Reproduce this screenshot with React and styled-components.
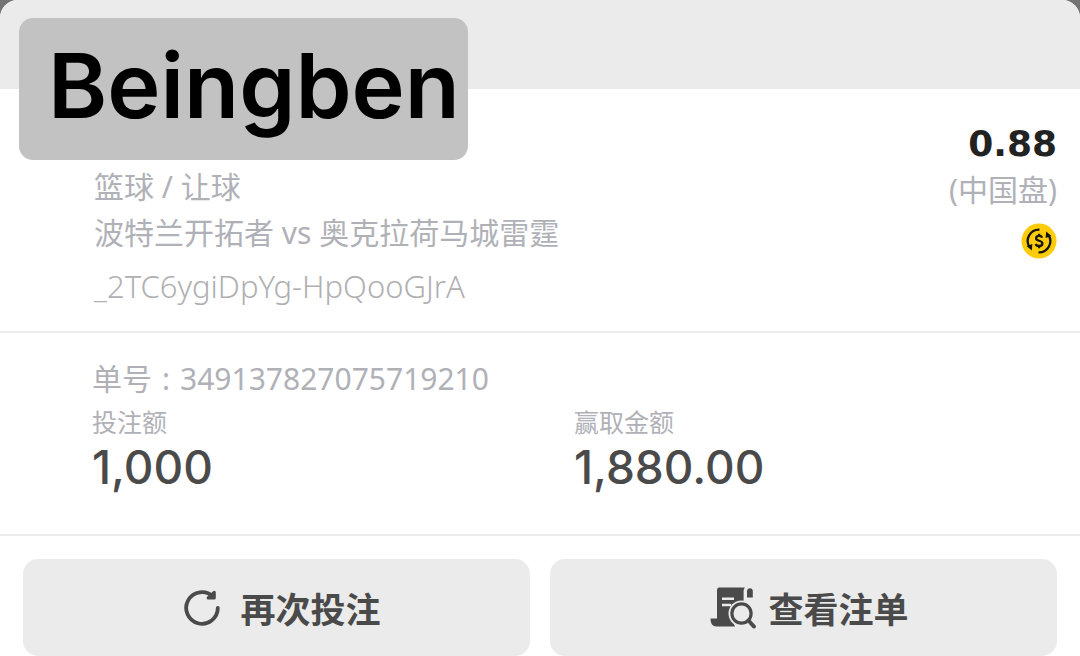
import styled, { createGlobalStyle } from 'styled-components'

const stakes = [
  { label: '投注额', value: '1,000' },
  { label: '赢取金额', value: '1,880.00' },
]

const CoinIcon = () => (
  <svg width="36" height="36" viewBox="0 0 36 36" fill="none" aria-hidden="true">
    <circle cx="18" cy="18" r="17.5" fill="#fccc0a" />
    <path d="M18.5 6.6A11.3 11.3 0 0 0 8.4 23.8" stroke="#17140a" strokeWidth="2.3" />
    <path d="M17.5 29.4A11.3 11.3 0 0 0 27.6 12.2" stroke="#17140a" strokeWidth="2.3" />
    <path d="M5.6 23l5.8-2-.6 6.4z" fill="#17140a" />
    <path d="M30.4 13l-5.8 2 .6-6.4z" fill="#17140a" />
    <path
      d="M21.2 14.6c-.5-1.2-1.6-1.7-3.1-1.7-1.8 0-3 .9-3 2.4 0 3.3 6.3 1.6 6.3 5.1 0 1.6-1.4 2.6-3.3 2.6-1.7 0-3-.7-3.5-2M18.1 10.8v2.4M18.1 22.8v2.4"
      stroke="#17140a"
      strokeWidth="2.3"
    />
  </svg>
)

const RepeatIcon = () => (
  <svg width="36" height="36" viewBox="0 0 36 36" fill="none" stroke="#4a4a4a" strokeWidth="3.8" strokeLinecap="round" aria-hidden="true">
    <path d="M33.8 18A15.8 15.8 0 1 1 29 6.6" />
    <path d="M30.2 2.4V8h-6z" strokeWidth="3.2" strokeLinejoin="round" fill="#4a4a4a" />
  </svg>
)

const SlipIcon = () => (
  <svg width="46" height="42" viewBox="0 0 46 42" fill="none" aria-hidden="true">
    <path
      d="M9 .5h26C33.6 1.8 33.6 3.6 33.6 5.5V17H22v14.5l3 8H6.5C2.5 39.5.5 36.5.5 31.5H7V3A2.5 2.5 0 0 1 9 .5z"
      fill="#4a4a4a"
    />
    <path d="M37 10.5v-7a3 3 0 0 1 5.8 0v7z" fill="#4a4a4a" />
    <path d="M12 11.7h12M12 18h9" stroke="#ebebeb" strokeWidth="2.6" />
    <circle cx="31.5" cy="26.5" r="13" fill="#ebebeb" />
    <circle cx="31.5" cy="26.5" r="9.6" stroke="#4a4a4a" strokeWidth="3.2" />
    <path d="M38.5 33.5l5.4 6" stroke="#4a4a4a" strokeWidth="4" strokeLinecap="round" />
  </svg>
)

const App = () => {
  return (
    <>
      <GlobalStyle />
      <Sheet>
        <Header>
          <NameTag>Beingben</NameTag>
        </Header>

        <Details>
          <Match>
            <Line>篮球 / 让球</Line>
            <Line>波特兰开拓者 vs 奥克拉荷马城雷霆</Line>
            <Reference>_2TC6ygiDpYg-HpQooGJrA</Reference>
          </Match>
          <Odds>
            <OddsValue>0.88</OddsValue>
            <Line>(中国盘)</Line>
            <CoinIcon />
          </Odds>
        </Details>

        <Order>
          <OrderLine>
            <span>单号</span>
            <span>:</span>
            <span>349137827075719210</span>
          </OrderLine>
          <Stakes>
            {stakes.map((item) => (
              <div key={item.label}>
                <StakeLabel>{item.label}</StakeLabel>
                <StakeValue>{item.value}</StakeValue>
              </div>
            ))}
          </Stakes>
        </Order>

        <Actions>
          <ActionButton type="button" $gap="20px">
            <RepeatIcon />
            再次投注
          </ActionButton>
          <ActionButton type="button" $gap="12px">
            <SlipIcon />
            查看注单
          </ActionButton>
        </Actions>
      </Sheet>
    </>
  )
}

const GlobalStyle = createGlobalStyle`
  * {
    box-sizing: border-box;
  }

  body {
    margin: 0;
    background: #747474;
    font-family: 'Noto Sans', 'Noto Sans CJK SC', sans-serif;
    color: #4a4a4a;
  }

  p {
    margin: 0;
  }
`

const Sheet = styled.main`
  min-height: 100vh;
  border-radius: 18px 18px 0 0;
  background: #fff;
  overflow: hidden;
`

const Header = styled.header`
  position: relative;
  height: 89px;
  background: #ebebeb;
`

const NameTag = styled.h1`
  position: absolute;
  top: 18px;
  left: 19px;
  margin: 0;
  padding: 0 8px 6px 29px;
  border-radius: 14px;
  background: #c2c2c2;
  color: #000;
  font-family: Inter, sans-serif;
  font-size: 90px;
  font-weight: 600;
  line-height: 136px;
`

const Details = styled.section`
  display: flex;
  justify-content: space-between;
  padding: 32px 23px 21px 94px;
  border-bottom: 2px solid #ebebeb;
`

const Match = styled.div`
  padding-top: 43px;
`

const Line = styled.p`
  color: #b0b1b7;
  font-size: 30px;
  line-height: 46px;
`

const Reference = styled.p`
  margin-top: 8px;
  padding-bottom: 2px;
  color: #b0b0b2;
  font-size: 31px;
  font-weight: 300;
  line-height: 44px;
`

const Odds = styled.div`
  display: flex;
  flex-direction: column;
  align-items: flex-end;

  svg {
    margin-top: 10px;
  }
`

const OddsValue = styled.p`
  color: #222;
  font-family: 'DejaVu Sans', sans-serif;
  font-size: 36px;
  font-weight: 700;
  line-height: 46px;
`

const Order = styled.section`
  padding: 23px 24px 40px 92px;
  border-bottom: 2px solid #ebebeb;
`

const OrderLine = styled(Line)`
  display: flex;
  gap: 10px;
`

const Stakes = styled.div`
  display: grid;
  grid-template-columns: 1fr 1fr;
  margin-top: 2px;
`

const StakeLabel = styled.p`
  color: #b0b1b7;
  font-size: 25px;
  line-height: 36px;
`

const StakeValue = styled.p`
  font-family: Inter, sans-serif;
  font-size: 46px;
  font-weight: 500;
  line-height: 54px;
`

const Actions = styled.footer`
  display: grid;
  grid-template-columns: 1fr 1fr;
  gap: 20px;
  padding: 23px 23px 0;
`

const ActionButton = styled.button`
  display: flex;
  align-items: center;
  justify-content: center;
  gap: ${({ $gap }) => $gap};
  height: 97px;
  padding: 0 0 0 12px;
  border: 0;
  border-radius: 15px;
  background: #ebebeb;
  color: #4a4a4a;
  font-family: inherit;
  font-size: 35px;
  font-weight: 700;
  cursor: pointer;
`

export default App
